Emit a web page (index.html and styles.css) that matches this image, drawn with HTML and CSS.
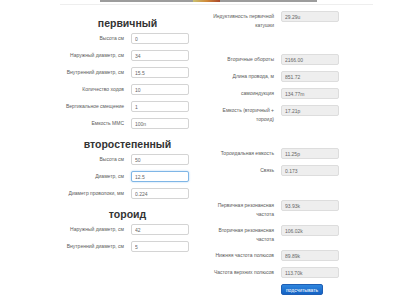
FILE: index.html
```html
<!DOCTYPE html>
<html lang="ru">

<head>
  <meta charset="UTF-8">
  <title>Калькулятор катушки Тесла</title>
  <link rel="stylesheet" href="styles.css">
</head>

<body>
  <div class="topbar">
    <div class="progress"><span class="progress-mark"></span></div>
  </div>
  <div class="rule"></div>

  <div class="page">
    <div class="col col-left">
      <h2 class="first">первичный</h2>
      <div class="row"><label>Высота см</label><input value="0"></div>
      <div class="row"><label>Наружный диаметр, см</label><input value="34"></div>
      <div class="row"><label>Внутренний диаметр, см</label><input value="15.5"></div>
      <div class="row"><label>Количество ходов</label><input value="10"></div>
      <div class="row"><label>Вертикальное смещение</label><input value="1"></div>
      <div class="row"><label>Емкость MMC</label><input value="100n"></div>

      <h2>второстепенный</h2>
      <div class="row"><label>Высота см</label><input value="50"></div>
      <div class="row"><label>Диаметр, см</label><input class="focus" value="12.5"></div>
      <div class="row"><label>Диаметр проволоки, мм</label><input value="0.224"></div>

      <h2>тороид</h2>
      <div class="row"><label>Наружный диаметр, см</label><input value="42"></div>
      <div class="row"><label>Внутренний диаметр, см</label><input value="5"></div>
    </div>

    <div class="col col-right">
      <div class="row tall"><label>Индуктивность первичной катушки</label><input readonly value="29.29u"></div>

      <div class="row gap"><label>Вторичные обороты</label><input readonly value="2166.00"></div>
      <div class="row"><label>Длина провода, м</label><input readonly value="851.72"></div>
      <div class="row"><label>самоиндукция</label><input readonly value="134.77m"></div>
      <div class="row tall"><label>Емкость (вторичный + тороид)</label><input readonly value="17.21p"></div>

      <div class="row gap"><label>Тороидальная емкость</label><input readonly value="11.25p"></div>
      <div class="row"><label>Связь</label><input readonly value="0.173"></div>

      <div class="row tall gap"><label>Первичная резонансная частота</label><input readonly value="93.93k"></div>
      <div class="row tall"><label>Вторичная резонансная частота</label><input readonly value="106.02k"></div>
      <div class="row"><label>Нижняя частота полюсов</label><input readonly value="89.89k"></div>
      <div class="row"><label>Частота верхних полюсов</label><input readonly value="113.70k"></div>

      <button class="btn">подсчитывать</button>
    </div>
  </div>
</body>

</html>
```

FILE: styles.css
```css
html,
body {
  margin: 0;
  padding: 0;
  background: #fff;
  font-family: "Liberation Sans", Arial, sans-serif;
  color: #333;
}

.topbar {
  height: 2px;
}

.progress {
  width: 217px;
  height: 2px;
  margin-left: 100px;
  background: #9c9c9c;
}

.progress-mark {
  display: block;
  width: 27px;
  height: 2px;
  margin-left: 93px;
  background: linear-gradient(to right, #c8c070, #d08a3a, #a8472c);
}

.rule {
  height: 1px;
  margin: 2px 27px 0 60px;
  background: #eee;
}

.page {
  display: flex;
  width: 300px;
  margin: 0 auto;
}

.col {
  width: 150px;
}

.col-right {
  padding-top: 6px;
}

h2 {
  margin: 0;
  padding-left: 5px;
  height: 19px;
  line-height: 19px;
  font-size: 10.5px;
  font-weight: bold;
  text-align: center;
  color: #333;
}

h2.first {
  margin-top: 9px;
}

.row {
  display: flex;
  align-items: flex-start;
  margin-bottom: 6px;
}

/* margins collapse with the row above, so 24 - 6 = 18px extra */
.row.gap {
  margin-top: 24px;
}

label {
  width: 64px;
  margin-left: 10px;
  padding: 1px 7px 0 0;
  text-align: right;
  font-size: 5px;
  line-height: 9px;
  color: #5a5a5a;
}

input {
  box-sizing: border-box;
  width: 58px;
  height: 11px;
  margin: 0;
  padding: 0 3px;
  border: 1px solid #d4d4d4;
  border-radius: 2px;
  background: #fff;
  font-family: "Liberation Sans", Arial, sans-serif;
  font-size: 5px;
  color: #666;
  outline: none;
}

input[readonly] {
  background: #eee;
  border-color: #ddd;
}

input.focus {
  border-color: #7fb6e6;
  box-shadow: 0 0 2px rgba(102, 175, 233, .6);
}

.btn {
  display: block;
  box-sizing: border-box;
  width: 42px;
  height: 11px;
  margin: 0 0 0 81px;
  padding: 0;
  border: 1px solid #1f5fb4;
  border-radius: 2px;
  background: linear-gradient(#2f86de, #1462c4);
  color: #fff;
  font-family: "Liberation Sans", Arial, sans-serif;
  font-size: 5px;
}
```
